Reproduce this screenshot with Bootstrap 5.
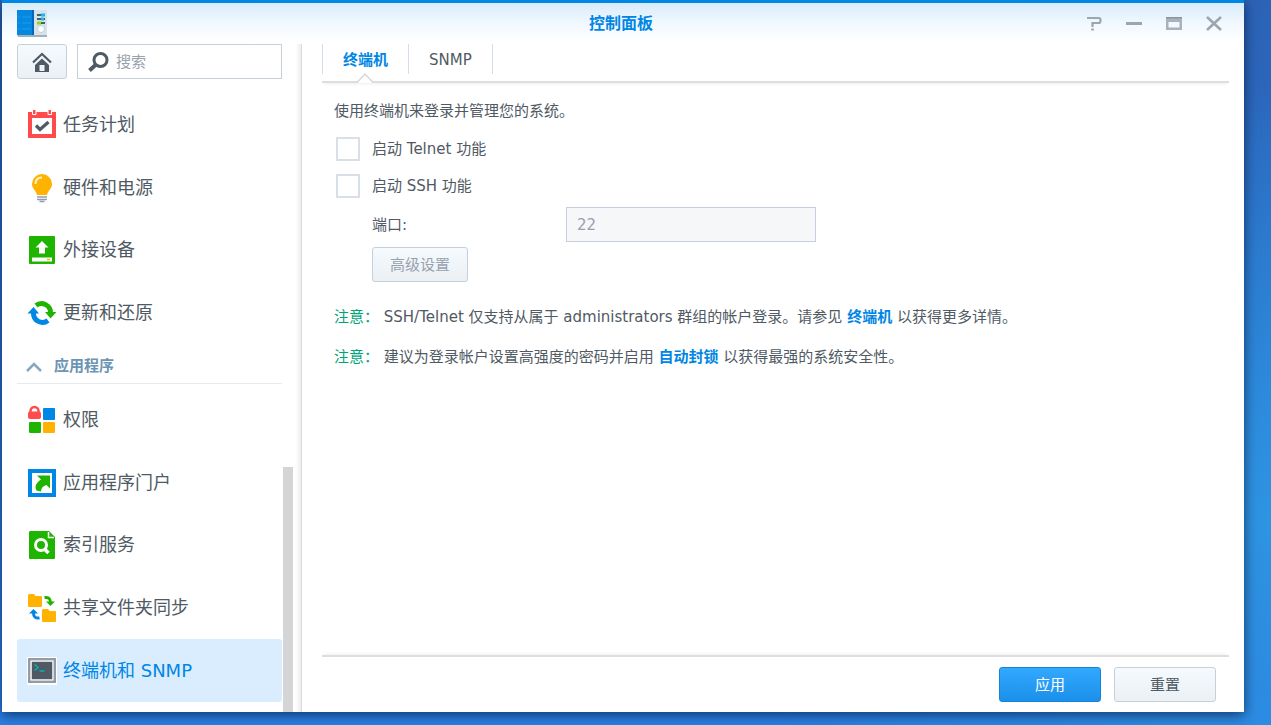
<!DOCTYPE html>
<html lang="zh-CN">
<head>
<meta charset="utf-8">
<meta name="viewport" content="width=device-width, initial-scale=1">
<title>控制面板</title>
<link href="https://cdn.jsdelivr.net/npm/bootstrap@5.3.0/dist/css/bootstrap.min.css" rel="stylesheet">
<style>
  :root { --ink: #505a64; --accent: #0086e5; --line: #c6d0da; }
  body {
    font: 15px/20px "DejaVu Sans", "Noto Sans CJK SC", sans-serif;
    color: var(--ink);
    padding: 0 27px 13px 2px;
    background: radial-gradient(ellipse 45% 60% at 100% 72%, #2e94e2, transparent), linear-gradient(#2c63b6, #2a6fc8 45%, #2a80e4);
  }
  a { color: var(--accent); text-decoration: none; font-weight: bold; }
  .app-window {
    background: linear-gradient(#d8ecf9, #f3f9ff 22px, #fff 40px) no-repeat #fff;
    border-top: 3px solid var(--accent);
    box-shadow: 0 3px 12px rgba(0, 10, 40, .65);
  }
  .title-bar { height: 41px; padding: 0 19px 0 15px; }
  .title-bar h1 { font-size: 16px; line-height: 20px; font-weight: bold; color: var(--accent); }
  .side-slot { width: 112px; }
  .win-buttons { gap: 18px; }
  .win-btn { width: 22px; height: 22px; border: 0; background: none; padding: 0; }
  .win-btn svg, .glyph { display: block; }
  .sidebar { width: 300px; padding-left: 15px; border-right: 1px solid #dcdcdc; box-shadow: inset -5px 0 4px -3px #e8e8e8; }
  .tool-row { padding-right: 19px; gap: 10px; }
  .btn-dsm {
    --bs-btn-font-size: 15px; --bs-btn-line-height: 20px; --bs-btn-border-radius: 3px;
    --bs-btn-color: var(--ink); --bs-btn-border-color: #c6d0da; --bs-btn-disabled-color: #98a2ae; --bs-btn-disabled-border-color: #c6d0da; --bs-btn-disabled-opacity: 1;
    height: 35px; padding: 0 17px; background: linear-gradient(#f5faff, #ebf0f5);
  }
  .btn-apply { --bs-btn-color: #fff; --bs-btn-border-color: #1483d8; background: linear-gradient(#33a8ff, #1a90ea); }
  .btn-home { width: 50px; padding: 0; }
  .footer-btn { width: 102px; }
  .search-box { height: 35px; border: 1px solid var(--line); padding: 0 9px; gap: 7px; }
  .search-box input { border: 0; outline: 0; width: 0; background: none; padding: 0; }
  .search-box input::placeholder { color: #98a2ae; opacity: 1; }
  .nav-scroll { padding: 15px 8px 0 0; }
  .nav-items { width: 265px; }
  .group-system, .group-apps { display: grid; grid-auto-rows: 1fr; margin: 0; padding: 0; list-style: none; }
  .group-system { height: 250px; }
  .group-apps { height: 313px; margin-top: 5px; }
  .nav-entry { font-size: 18px; line-height: 24px; font-weight: normal; color: var(--ink); padding: 0 10px; gap: 6px; border-radius: 3px; height: 100%; }
  .nav-entry.active { background: #d9edff; color: var(--accent); }
  .group-toggle { height: 40px; color: #6c94b4; padding: 4px 9px 0; gap: 12px; border: 0; border-bottom: 1px solid #e8ebee; background: none; font-weight: bold; }
  .scroll-thumb { width: 10px; height: 245px; background: #d4d5d7; }
  .content-pane { padding: 0 15px 10px 20px; }
  .tab-strip { height: 39px; border-bottom: 2px solid #dedede; box-shadow: 0 3px 3px -2px #eee; }
  .tab-item { height: 30px; padding: 2px 20px 0; border: 0; border-right: 1px solid #d3deea; background: none; color: var(--ink); position: relative; }
  .tab-item:first-child { border-left: 1px solid #d3deea; }
  .tab-item.active { color: var(--accent); font-weight: bold; }
  .tab-pointer { position: absolute; left: 50%; top: 29px; margin-left: -10px; }
  .settings { padding: 18px 12px 0; }
  .settings .intro { margin-bottom: 9px; }
  .check-line { height: 37px; gap: 12px; padding-left: 2px; }
  .check-line input { appearance: none; width: 24px; height: 24px; border: 2px solid #d8dfe7; margin: 0; background: #fff; }
  .port-line { margin: 3px 0 5px; }
  .port-label { width: 194px; }
  .port-input { width: 250px; height: 35px; border: 1px solid #c6d0dc; border-radius: 0; padding: 0 10px; background: #f6f7f9; color: #98a2ae; }
  .indent { padding-left: 38px; }
  .notes { margin-top: 25px; }
  .notes p { margin-bottom: 20px; }
  .note-tag { color: #00a675; }
  .footer-bar { border-top: 2px solid #dedede; box-shadow: 0 -3px 3px -2px #eee; padding: 10px 13px 0; gap: 13px; }
</style>
</head>
<body class="vh-100 overflow-hidden d-flex">
<main class="app-window flex-fill d-flex flex-column">
  <header class="title-bar d-flex align-items-center justify-content-between">
    <div class="side-slot">
      <svg class="glyph" width="31" height="27" viewBox="0 0 31 27" aria-hidden="true">
        <path d="M0 24h30v3H1z" fill="#a3b0ba"/><path d="M17 0h13v25H17z" fill="#d8e2ea"/><path d="M0 0h17v25H0z" fill="#0788e0"/><path d="M15 0h2v25h-2z" fill="#0069bd"/>
        <path d="M1 7h2m2 0h9M1 13h2m2 0h9M1 19h2m2 0h9" stroke="#14a0f0"/>
        <path d="M20 5h8M20 9h8M20 13h8" stroke="#45606e" stroke-width="2"/><path d="M24 5h4" stroke="#12b9eb" stroke-width="3"/><path d="M24 9h3" stroke="#12b9eb" stroke-width="3"/><path d="M20 13h4" stroke="#8be000" stroke-width="3"/>
        <circle cx="24" cy="19" r="3.500" fill="#fff" stroke="#bdd1de"/>
      </svg>
    </div>
    <h1 class="m-0">控制面板</h1>
    <div class="side-slot d-flex flex-shrink-0 justify-content-end">
      <div class="win-buttons d-flex">
        <button class="win-btn" aria-label="帮助"><svg width="22" height="22" fill="none" stroke="#9ba6af" stroke-width="2.200"><path d="M4 5h11.500q2 0 2 2v1q0 2-2 2H9.500v4M8.300 16.500h2.600"/></svg></button>
        <button class="win-btn" aria-label="最小化"><svg width="22" height="22"><path d="M3 9h16v3H3z" fill="#9ba6af"/></svg></button>
        <button class="win-btn" aria-label="最大化"><svg width="22" height="22"><path d="M3 4h16v13H3zM5.500 9v5.500h11V9z" fill="#a8b2ba" fill-rule="evenodd"/><path d="M3 4h16v1.500H3z" fill="#8a969f"/></svg></button>
        <button class="win-btn" aria-label="关闭"><svg width="22" height="22"><path d="M4 4l14 13M18 4L4 17" stroke="#9ba6af" stroke-width="2.600"/></svg></button>
      </div>
    </div>
  </header>

  <div class="d-flex flex-fill">
    <aside class="sidebar flex-shrink-0 d-flex flex-column">
      <div class="tool-row d-flex">
        <button class="btn btn-dsm btn-home flex-shrink-0 d-flex align-items-center justify-content-center" aria-label="首页">
          <svg width="20" height="20" viewBox="0 0 20 20"><path d="M10 6.500l7 6.500v7H3v-7zM7.500 13v6h5v-6z" fill="#505a64" fill-rule="evenodd"/><path d="M1 10.500L10 2l9 8.500" fill="none" stroke="#505a64" stroke-width="2.200"/></svg>
        </button>
        <label class="search-box d-flex align-items-center flex-fill bg-white">
          <svg class="flex-shrink-0" width="22" height="22" fill="none" stroke="#505a64"><circle cx="13.500" cy="9" r="6.500" stroke-width="3"/><path d="M8.500 14L2.500 19.500" stroke-width="4"/></svg>
          <input class="flex-fill" type="text" placeholder="搜索" aria-label="搜索">
        </label>
      </div>
      <div class="nav-scroll d-flex justify-content-between flex-fill">
        <nav class="nav-items">
          <ul class="group-system">
            <li><a class="nav-entry d-flex align-items-center" href="#"><svg class="flex-shrink-0" width="30" height="30"><path d="M1 2h28v26H1zM5 8v16h20V8z" fill="#ff4b4b" fill-rule="evenodd"/><path d="M5.500-.5h3.500v5H5.500zM21-.5h3.500v5H21z" fill="#ff4b4b" stroke="#fff"/><path d="M9 15.500l4 4L21.500 12" fill="none" stroke="#505a64" stroke-width="3.200"/></svg>任务计划</a></li>
            <li><a class="nav-entry d-flex align-items-center" href="#"><svg class="flex-shrink-0" width="30" height="30"><path d="M15 1a10 10 0 0 1 10 10c0 5-4 6-5 11H10C9 17 5 16 5 11A10 10 0 0 1 15 1z" fill="#ffb200"/><path d="M8.500 11c0-4 2.500-6.500 6.500-6.500" fill="none" stroke="#fff2c4" stroke-width="1.800"/><path d="M10 24h10M10 26.500h10M12.500 28.500h5" stroke="#929cae" stroke-width="1.500"/></svg>硬件和电源</a></li>
            <li><a class="nav-entry d-flex align-items-center" href="#"><svg class="flex-shrink-0" width="30" height="30"><rect x="2" y="1" width="26" height="28" rx="1" fill="#1fb400"/><path d="M15 6l6.500 6.500H18V18.500h-6v-6H8.500zM5 22.500h20v4H5z" fill="#fff"/><path d="M20 24.500h3" stroke="#ffb200" stroke-width="1.500"/></svg>外接设备</a></li>
            <li><a class="nav-entry d-flex align-items-center" href="#"><svg class="flex-shrink-0" width="30" height="30" fill="none" stroke-width="5"><path d="M9 7.500A9 9 0 0 1 23.500 15" stroke="#1fb400"/><path d="M18 14h11.500L23.500 20.500z" fill="#1fb400"/><path d="M21 22.500A9 9 0 0 1 6.500 15" stroke="#0086e5"/><path d="M.5 15.500H12L6.500 9z" fill="#0086e5"/></svg>更新和还原</a></li>
          </ul>
          <button class="group-toggle d-flex align-items-center w-100"><svg width="16" height="12"><path d="M1 11l7-7 7 7" fill="none" stroke="#86a8bf" stroke-width="2.500"/></svg>应用程序</button>
          <ul class="group-apps">
            <li><a class="nav-entry d-flex align-items-center" href="#"><svg class="flex-shrink-0" width="30" height="30"><path d="M3.500 8V6a4 4 0 0 1 8 0v2" fill="none" stroke="#ff4b4b" stroke-width="2.500"/><rect x="1" y="6.500" width="13" height="7.500" rx="2" fill="#ff4b4b"/><rect x="16" y="3" width="12" height="12" rx="1" fill="#0086e5"/><rect x="2" y="17" width="12" height="11" rx="1" fill="#1fb400"/><rect x="16" y="17" width="12" height="11" rx="1" fill="#ffb200"/></svg>权限</a></li>
            <li><a class="nav-entry d-flex align-items-center" href="#"><svg class="flex-shrink-0" width="30" height="30"><path d="M1 1h28v28H1zM5 5v20h20V5z" fill="#0086e5" fill-rule="evenodd"/><path d="M10 7.500h13v13L19.500 17C16 18 14 20 14 23.500l-4.500-1C7 18 10 14 14 11.500z" fill="#1fb400"/></svg>应用程序门户</a></li>
            <li><a class="nav-entry d-flex align-items-center" href="#"><svg class="flex-shrink-0" width="30" height="30"><path d="M3 1h19l6 6v21a1 1 0 0 1-1 1H3a1 1 0 0 1-1-1V2z" fill="#1fb400"/><path d="M21.500 2v5.500H27" fill="none" stroke="#fff" stroke-width="1.500"/><circle cx="14" cy="15" r="5.500" fill="none" stroke="#fff" stroke-width="3"/><path d="M17.500 19l4 4" stroke="#fff" stroke-width="3.500"/></svg>索引服务</a></li>
            <li><a class="nav-entry d-flex align-items-center" href="#"><svg class="flex-shrink-0" width="30" height="30"><path id="fd" d="M2 1h5l1.500 2H14a1 1 0 0 1 1 1v9a1 1 0 0 1-1 1H2a1 1 0 0 1-1-1V2z" fill="#ffb200"/><use href="#fd" x="14" y="15"/><path d="M17.500 4.500c4-.5 6 1 6 5" fill="none" stroke="#1fb400" stroke-width="3"/><path d="M19 8.500h9L23.500 13z" fill="#1fb400"/><path d="M12.500 25c-4 .5-6-1-6-5" fill="none" stroke="#0086e5" stroke-width="3"/><path d="M2 20.500h9L6.500 16z" fill="#0086e5"/></svg>共享文件夹同步</a></li>
            <li><a class="nav-entry active d-flex align-items-center" href="#" aria-current="page"><svg class="flex-shrink-0" width="30" height="30"><rect y="1" width="30" height="28" rx="1" fill="#fff"/><rect x="2" y="3" width="26" height="23" fill="#505a64" stroke="#929ca6" stroke-width="2"/><rect x="4" y="5" width="22" height="19" fill="none" stroke="#fff" stroke-width="1.500"/><path d="M7.500 8.500l3.500 3-3.500 3M12.500 15h5" fill="none" stroke="#00b4b0" stroke-width="1.500"/></svg>终端机和 SNMP</a></li>
          </ul>
        </nav>
        <div class="scroll-thumb align-self-end"></div>
      </div>
    </aside>

    <section class="content-pane flex-fill d-flex flex-column">
      <div class="tab-strip d-flex" role="tablist">
        <button class="tab-item active" role="tab" aria-selected="true">终端机<svg class="tab-pointer" width="18" height="10"><path d="M0 10L9 1l9 9z" fill="#fff"/><path d="M0 9.500h1L9 1l8 8.500h1" fill="none" stroke="#d8d8d8" stroke-width="1.500"/></svg></button>
        <button class="tab-item" role="tab" aria-selected="false">SNMP</button>
      </div>
      <form class="settings flex-fill">
        <p class="intro">使用终端机来登录并管理您的系统。</p>
        <div class="check-line d-flex align-items-center"><input type="checkbox" id="telnet"><label for="telnet">启动 Telnet 功能</label></div>
        <div class="check-line d-flex align-items-center"><input type="checkbox" id="ssh"><label for="ssh">启动 SSH 功能</label></div>
        <div class="indent port-line d-flex align-items-center"><label class="port-label" for="port">端口:</label><input class="port-input" id="port" type="text" value="22" disabled></div>
        <div class="indent"><button class="btn btn-dsm" type="button" disabled>高级设置</button></div>
        <div class="notes">
          <p><span class="note-tag">注意：</span> SSH/Telnet 仅支持从属于 administrators 群组的帐户登录。请参见 <a href="#">终端机</a> 以获得更多详情。</p>
          <p><span class="note-tag">注意：</span> 建议为登录帐户设置高强度的密码并启用 <a href="#">自动封锁</a> 以获得最强的系统安全性。</p>
        </div>
      </form>
      <footer class="footer-bar d-flex justify-content-end">
        <button class="btn btn-dsm btn-apply footer-btn">应用</button>
        <button class="btn btn-dsm footer-btn">重置</button>
      </footer>
    </section>
  </div>
</main>
<script src="https://cdn.jsdelivr.net/npm/bootstrap@5.3.0/dist/js/bootstrap.bundle.min.js"></script>
</body>
</html>
